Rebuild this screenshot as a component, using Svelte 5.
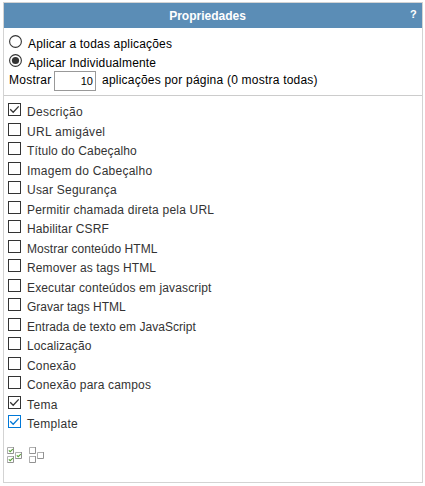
<script>
  const options = [
    { label: 'Descrição', checked: true, spacing: 0.3 },
    { label: 'URL amigável', spacing: 0.28 },
    { label: 'Título do Cabeçalho', spacing: 0.13 },
    { label: 'Imagem do Cabeçalho', spacing: 0.24 },
    { label: 'Usar Segurança', spacing: 0.22 },
    { label: 'Permitir chamada direta pela URL', spacing: 0.2 },
    { label: 'Habilitar CSRF', spacing: 0.14 },
    { label: 'Mostrar conteúdo HTML', spacing: 0.05 },
    { label: 'Remover as tags HTML', spacing: 0.12 },
    { label: 'Executar conteúdos em javascript', spacing: 0.14 },
    { label: 'Gravar tags HTML', spacing: 0 },
    { label: 'Entrada de texto em JavaScript', spacing: 0.05 },
    { label: 'Localização', spacing: 0.1 },
    { label: 'Conexão', spacing: 0.15 },
    { label: 'Conexão para campos', spacing: 0.18 },
    { label: 'Tema', checked: true, spacing: 0.4 },
    { label: 'Template', checked: true, active: true, spacing: 0.3 }
  ];
  const miniBoxes = [[0, 0], [0, 9], [8, 5]];
</script>

{#snippet radio(selected)}
  <svg class="radio" width="13" height="13" viewBox="0 0 13 13">
    <circle cx="6.5" cy="6.5" r="5.9" fill="#fff" stroke="#333" stroke-width="1.1" />
    {#if selected}<circle cx="6.5" cy="6.5" r="3.6" fill="#333" />{/if}
  </svg>
{/snippet}

{#snippet bulk(checked)}
  <svg width="16" height="17" viewBox="0 0 16 17">
    {#each miniBoxes as [x, y]}
      <g transform="translate({x} {y})">
        <path d="M6.5 0V6.5H0" fill="none" stroke="#929292" />
        <path d="M.5 7V.5H6" fill="none" stroke="#b0b0b0" />
        {#if checked}<path d="M1.8 3.3l1.4 1.4 2.6-2.6" fill="none" stroke="#5aa338" stroke-width="1.1" />{/if}
      </g>
    {/each}
  </svg>
{/snippet}

<div class="panel">
  <header><span class="title">Propriedades</span><span class="help">?</span></header>
  <section class="scope">
    <div class="choice">{@render radio(false)}<span>Aplicar a todas aplicações</span></div>
    <div class="choice">{@render radio(true)}<span>Aplicar Individualmente</span></div>
    <div class="paging">
      <span class="show">Mostrar</span>
      <span class="field">10</span>
      <span class="per">aplicações por página (0 mostra todas)</span>
    </div>
  </section>
  <section class="options">
    {#each options as option}
      <div class="option">
        <svg class:active={option.active} width="13" height="13" viewBox="0 0 13 13">
          <rect x=".5" y=".5" width="12" height="12" fill="#fff" stroke="currentColor" />
          {#if option.checked}<path d="M2.2 6.3l3 3 5.5-5.9" fill="none" stroke="currentColor" stroke-width="1.3" />{/if}
        </svg>
        <span style="letter-spacing: {option.spacing}px">{option.label}</span>
      </div>
    {/each}
  </section>
  <footer>{@render bulk(true)}{@render bulk(false)}</footer>
</div>

<style>
  :global(body) { background: #fff; }
  :global(#app) { padding-top: 2px; }
  .panel {
    box-sizing: border-box;
    width: 420px;
    height: 481px;
    margin: 0 0 0 3px;
    border: 1px solid #d3d3d3;
    font: 12px/14px "Liberation Sans", Arial, sans-serif;
    color: #333;
    white-space: nowrap;
  }
  svg { display: block; flex: none; }
  header {
    display: flex;
    height: 25px;
    background: #5b8db6;
    color: #fff;
    font-weight: bold;
  }
  .title { flex: 1; padding: 6px 0 0 1px; text-align: center; }
  .help { width: 12px; padding-top: 4px; font-size: 11px; }
  .scope {
    box-sizing: border-box;
    height: 68px;
    padding: 7px 0 0 5px;
    border-bottom: 1px solid #ccc;
    color: #000;
    letter-spacing: .18px;
  }
  .choice { display: flex; height: 19px; gap: 6px; }
  .choice span { padding-top: 2px; }
  .paging { display: flex; height: 20px; }
  .show { width: 45px; letter-spacing: .25px; }
  .field {
    box-sizing: border-box;
    width: 42px;
    height: 20px;
    margin-top: -2px;
    padding: 3px 2px 0 0;
    border: 1px solid #999;
    font-size: 11px;
    line-height: 12px;
    text-align: right;
    letter-spacing: 0;
  }
  .per { margin-left: 6px; letter-spacing: .22px; }
  .options { padding: 7px 0 0 4px; }
  .option { display: flex; height: 20px; gap: 6px; }
  .option:nth-child(even) { height: 19px; }
  .option span { padding-top: 2px; }
  .active { color: #0078d7; }
  footer { display: flex; gap: 6px; padding: 12px 0 0 3px; }
</style>
